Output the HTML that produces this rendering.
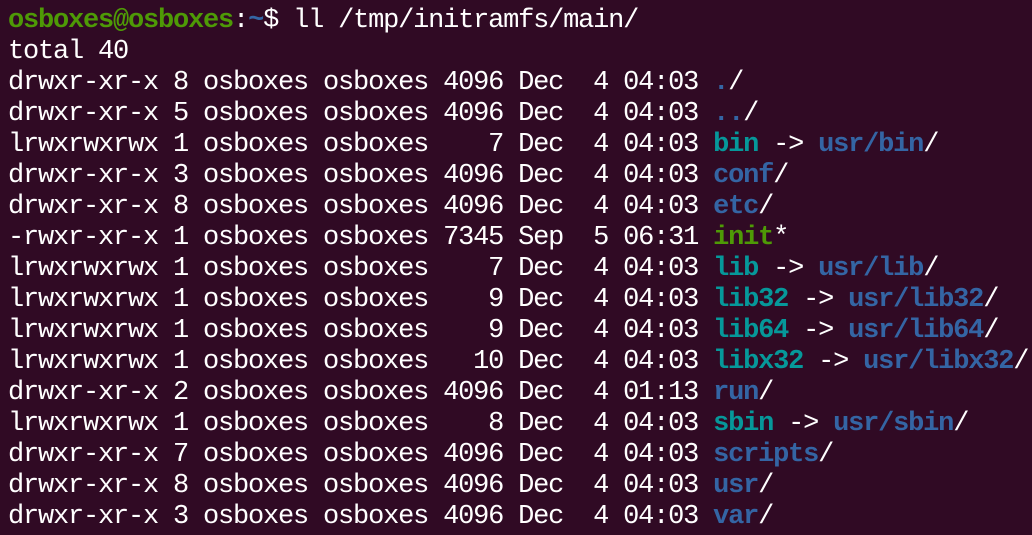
<!DOCTYPE html>
<html><head><meta charset="utf-8"><style>
html,body{margin:0;padding:0;background:#300a24;width:1032px;height:535px;overflow:hidden}
pre{margin:0;position:absolute;left:8px;top:6px;font-family:"Liberation Mono","DejaVu Sans Mono",monospace;font-size:27px;letter-spacing:-1.2px;line-height:31px;color:#ffffff;white-space:pre}
.g{color:#4e9a06;font-weight:bold}.b{color:#3465a4;font-weight:bold}.c{color:#06989a;font-weight:bold}
</style></head><body><pre><span class="g">osboxes@osboxes</span>:<span class="b">~</span>$ ll /tmp/initramfs/main/
total 40
drwxr-xr-x 8 osboxes osboxes 4096 Dec  4 04:03 <span class="b">.</span>/
drwxr-xr-x 5 osboxes osboxes 4096 Dec  4 04:03 <span class="b">..</span>/
lrwxrwxrwx 1 osboxes osboxes    7 Dec  4 04:03 <span class="c">bin</span> -> <span class="b">usr/bin</span>/
drwxr-xr-x 3 osboxes osboxes 4096 Dec  4 04:03 <span class="b">conf</span>/
drwxr-xr-x 8 osboxes osboxes 4096 Dec  4 04:03 <span class="b">etc</span>/
-rwxr-xr-x 1 osboxes osboxes 7345 Sep  5 06:31 <span class="g">init</span>*
lrwxrwxrwx 1 osboxes osboxes    7 Dec  4 04:03 <span class="c">lib</span> -> <span class="b">usr/lib</span>/
lrwxrwxrwx 1 osboxes osboxes    9 Dec  4 04:03 <span class="c">lib32</span> -> <span class="b">usr/lib32</span>/
lrwxrwxrwx 1 osboxes osboxes    9 Dec  4 04:03 <span class="c">lib64</span> -> <span class="b">usr/lib64</span>/
lrwxrwxrwx 1 osboxes osboxes   10 Dec  4 04:03 <span class="c">libx32</span> -> <span class="b">usr/libx32</span>/
drwxr-xr-x 2 osboxes osboxes 4096 Dec  4 01:13 <span class="b">run</span>/
lrwxrwxrwx 1 osboxes osboxes    8 Dec  4 04:03 <span class="c">sbin</span> -> <span class="b">usr/sbin</span>/
drwxr-xr-x 7 osboxes osboxes 4096 Dec  4 04:03 <span class="b">scripts</span>/
drwxr-xr-x 8 osboxes osboxes 4096 Dec  4 04:03 <span class="b">usr</span>/
drwxr-xr-x 3 osboxes osboxes 4096 Dec  4 04:03 <span class="b">var</span>/</pre></body></html>
